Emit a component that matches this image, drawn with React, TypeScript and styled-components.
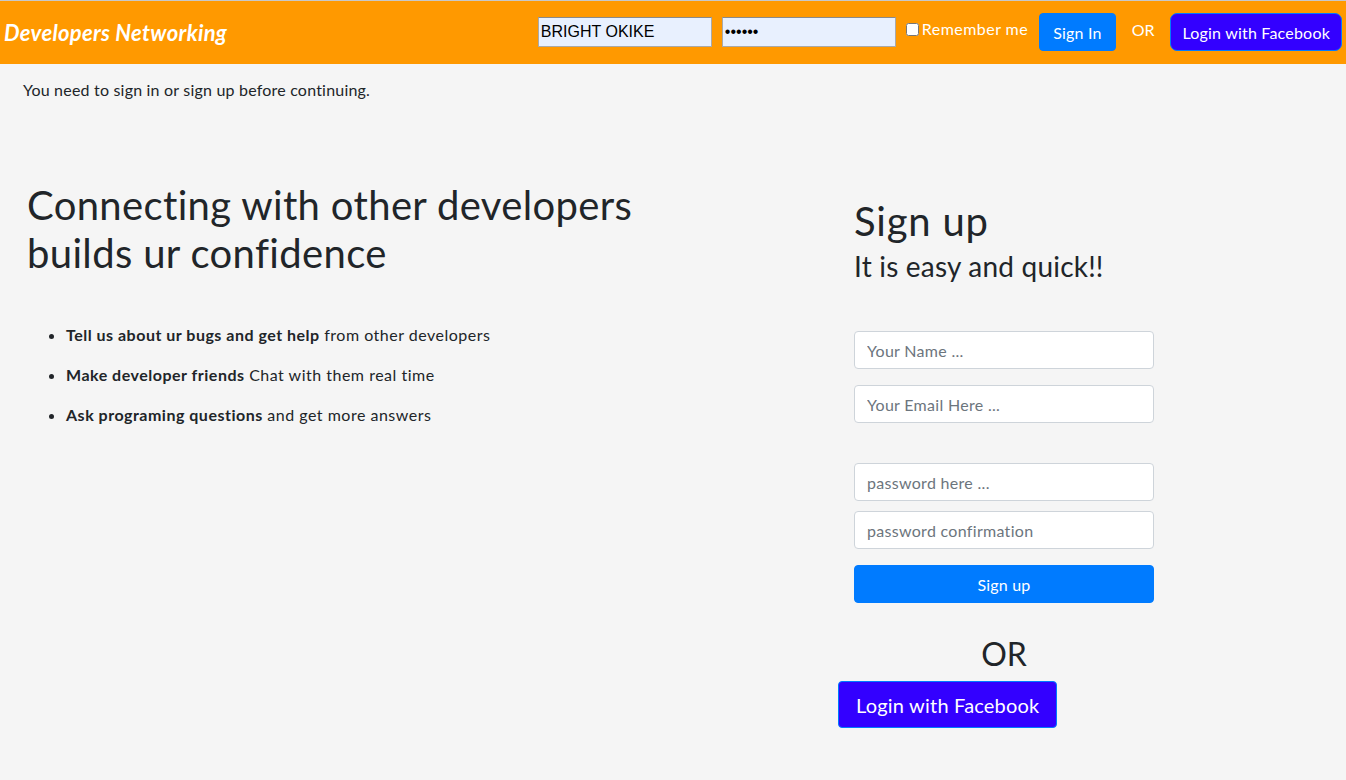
import React from "react";
import styled, { createGlobalStyle } from "styled-components";

const Global = createGlobalStyle`
  html, body { margin: 0; padding: 0; }
  body {
    background: #f5f5f5;
    font-family: Lato, "Noto Sans", sans-serif;
    color: #212529;
    font-size: 16px;
    line-height: 1.5;
  }
  * { box-sizing: border-box; }
`;

const Page = styled.div`
  min-height: 780px;
  border-top: 1px solid #c8c8c8;
`;

const NavBar = styled.header`
  height: 63px;
  background: #ff9900;
  display: flex;
  align-items: center;
  padding: 0 4px;
`;

const Brand = styled.a`
  color: #fff;
  font-size: 22px;
  font-weight: 700;
  font-style: italic;
  letter-spacing: 0.3px;
  text-decoration: none;
  margin-right: auto;
`;

const NavForm = styled.form`
  display: flex;
  align-items: center;
  margin: -1px 0 0;
`;

const NavInput = styled.input`
  width: 174px;
  height: 30px;
  background: #e8f0fe;
  border: 1px solid #a9a9a9;
  border-top-color: #8a8a8a;
  padding: 0 2px;
  font-family: "Liberation Sans", Arial, sans-serif;
  font-size: 16px;
  color: #000;
  margin-right: 10px;
`;

const CheckLabel = styled.label`
  display: flex;
  align-items: center;
  color: #fff;
  font-size: 16px;
  letter-spacing: 0.45px;
  margin-right: 11px;
  margin-top: -6px;
`;

const Check = styled.input`
  width: 13px;
  height: 13px;
  margin: 0 3px 0 0;
`;

const Button = styled.button<{ $bg: string }>`
  background: ${(p) => p.$bg};
  color: #fff;
  border: 1px solid #007bff;
  border-radius: 4px;
  font-family: inherit;
  font-size: 16px;
  letter-spacing: 0.2px;
  height: 38px;
  padding: 0 13px;
  cursor: pointer;
`;

const NavOr = styled.span`
  color: #fff;
  font-size: 16px;
  margin: -4px 16px 0;
`;

const NavFb = styled(Button)`
  border-radius: 7px;
  padding: 0 11px;
`;

const Flash = styled.p`
  margin: 14px 0 0 23px;
  font-size: 16px;
  letter-spacing: 0.2px;
`;

const Main = styled.main`
  display: grid;
  grid-template-columns: 827px 300px;
  padding-left: 27px;
`;

const Left = styled.section`
  padding-top: 79px;
`;

const Hero = styled.h1`
  font-size: 40px;
  font-weight: 400;
  line-height: 48px;
  letter-spacing: 0.35px;
  margin: 0;
  width: 660px;
`;

const List = styled.ul`
  margin: 46px 0 0;
  padding-left: 39px;
`;

const Item = styled.li`
  font-size: 16px;
  line-height: 24px;
  letter-spacing: 0.5px;
  margin-bottom: 16px;
`;

const Right = styled.section`
  padding-top: 95px;
  display: flex;
  flex-direction: column;
`;

const Title = styled.h1`
  font-size: 40px;
  font-weight: 400;
  line-height: 48px;
  letter-spacing: 0.8px;
  margin: 0;
`;

const Sub = styled.h3`
  font-size: 28px;
  font-weight: 400;
  line-height: 34px;
  letter-spacing: 0.2px;
  margin: 4px 0 48px;
`;

const Field = styled.input<{ $gap: number }>`
  width: 300px;
  height: 38px;
  border: 1px solid #ced4da;
  border-radius: 4px;
  background: #fff;
  padding: 0 12px;
  font-family: inherit;
  font-size: 16px;
  letter-spacing: 0.3px;
  color: #495057;
  margin-bottom: ${(p) => p.$gap}px;
  &::placeholder { color: #6c757d; }
`;

const Submit = styled(Button)`
  width: 300px;
`;

const Or = styled.div`
  width: 300px;
  text-align: center;
  font-size: 32px;
  line-height: 38px;
  margin-top: 32px;
`;

const BigFb = styled(Button)`
  align-self: flex-start;
  margin-left: -16px;
  margin-top: 8px;
  height: 47px;
  font-size: 20px;
  padding: 0 17px;
  border-radius: 4px;
`;

export default function App() {
  return (
    <Page>
      <Global />
      <NavBar>
        <Brand href="#">Developers Networking</Brand>
        <NavForm onSubmit={(e) => e.preventDefault()}>
          <NavInput defaultValue="BRIGHT OKIKE" />
          <NavInput type="password" defaultValue="secret" />
          <CheckLabel>
            <Check type="checkbox" />
            Remember me
          </CheckLabel>
          <Button $bg="#007bff" type="submit">Sign In</Button>
          <NavOr>OR</NavOr>
          <NavFb $bg="#3300ff" type="button">Login with Facebook</NavFb>
        </NavForm>
      </NavBar>
      <Flash>You need to sign in or sign up before continuing.</Flash>
      <Main>
        <Left>
          <Hero>Connecting with other developers builds ur confidence</Hero>
          <List>
            <Item><b>Tell us about ur bugs and get help</b> from other developers</Item>
            <Item><b>Make developer friends</b> Chat with them real time</Item>
            <Item><b>Ask programing questions</b> and get more answers</Item>
          </List>
        </Left>
        <Right>
          <Title>Sign up</Title>
          <Sub>It is easy and quick!!</Sub>
          <Field $gap={16} placeholder="Your Name ..." />
          <Field $gap={40} placeholder="Your Email Here ..." />
          <Field $gap={10} type="password" placeholder="password here ..." />
          <Field $gap={16} type="password" placeholder="password confirmation" />
          <Submit $bg="#007bff" type="button">Sign up</Submit>
          <Or>OR</Or>
          <BigFb $bg="#3300ff" type="button">Login with Facebook</BigFb>
        </Right>
      </Main>
    </Page>
  );
}
